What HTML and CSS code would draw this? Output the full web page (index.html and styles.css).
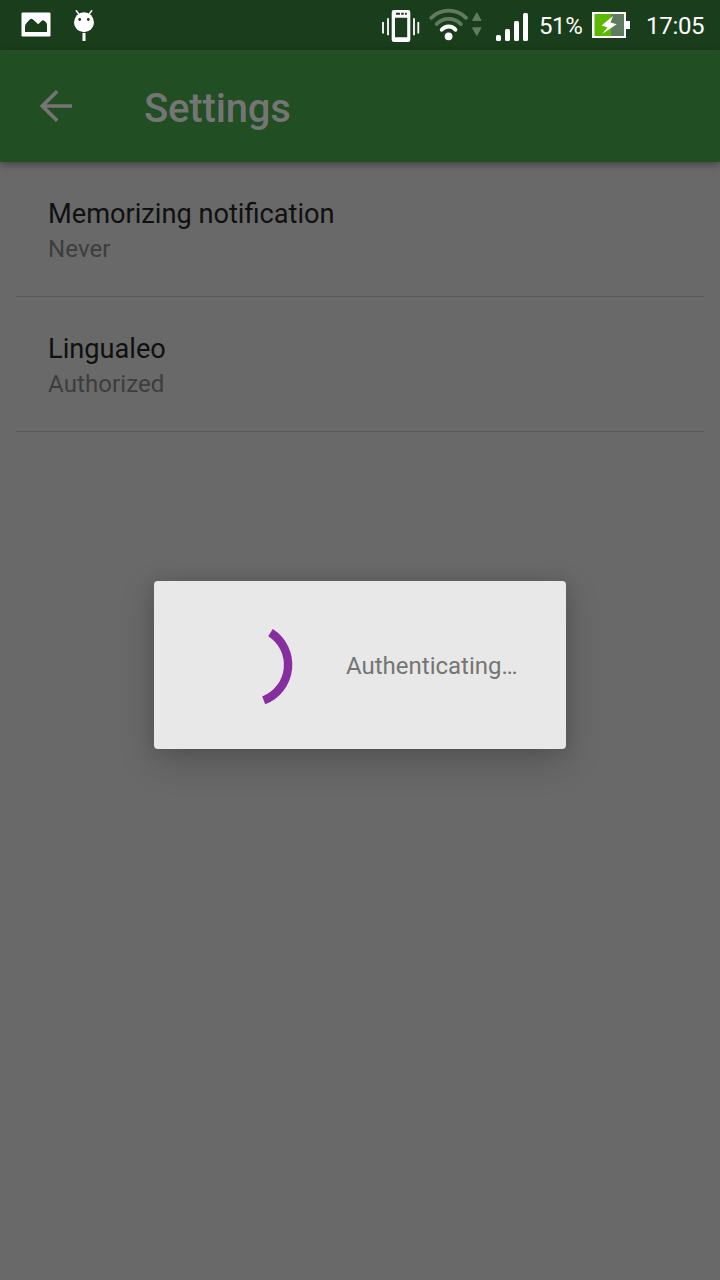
FILE: index.html
```html
<!DOCTYPE html>
<html lang="en">
<head>
<meta charset="utf-8">
<title>Settings</title>
<link rel="stylesheet" href="styles.css">
</head>
<body>
<div class="screen">
  <header class="status">
    <svg class="ico-picture" width="30" height="50" viewBox="21 0 30 50"><path fill="#fff" fill-rule="evenodd" d="M22.500 12.600h27q1 0 1 1v22q0 1-1 1h-27q-1 0-1-1v-22q0-1 1-1zM25 32h22v-7q0-2-1.500-3.200l-1.800-1.300q-1.200-.6-2.200.4l-3.300 3.300-5.200-4.800q-1.700-1.200-3.200.2l-3.300 3.400q-1.500 1.500-1.500 3.500z"/></svg>
    <svg class="ico-droid" width="22" height="50" viewBox="73 0 22 50"><g stroke="#fff" fill="none" stroke-width="1.500" stroke-linecap="round"><path d="M76.300 10.800l3 4M91.700 10.800l-3 4"/></g><circle cx="84" cy="22.200" r="10" fill="#fff"/><circle cx="79.700" cy="19.500" r="1.400" fill="#1a3e1b"/><circle cx="88.300" cy="19.500" r="1.400" fill="#1a3e1b"/><path fill="#fff" d="M82.500 33h3v8h-3z"/></svg>
    <span class="spacer"></span>
    <svg class="ico-vibrate" width="38" height="50" viewBox="382 0 38 50"><path fill="#fff" fill-rule="evenodd" d="M394 10h14q2.300 0 2.300 2.300v27.400q0 2.300-2.300 2.300h-14q-2.300 0-2.300-2.300V12.300q0-2.300 2.300-2.300zM395 17.700v19.600h12.200V17.700zM396 12.800v2h4v-2zM401.200 12.800v2h2.600v-2zM405 12.800v2h1.800v-2z"/><path stroke="#fff" stroke-width="1.800" d="M383 22v11.500M388 18.300v17M414 18.300v17M418.300 22v11.500"/></svg>
    <svg class="ico-wifi" width="54" height="50" viewBox="429 0 54 50"><g fill="none" stroke-width="3.800" stroke-linecap="round"><path stroke="#5f7b60" d="M431.300 17.800Q438.500 10.700 448.700 10.700T466 17.800M436.700 24Q441.500 18.800 448.700 18.800T460.700 24"/><path stroke="#fff" d="M441.700 29.700Q444.500 26.500 448.700 26.500T455.500 29.700"/></g><circle cx="448.600" cy="36.300" r="3.900" fill="#fff"/><path fill="#5f7b60" stroke="#5f7b60" stroke-linejoin="round" d="M472.500 20.400h8.500l-4.200-7.600zM472.500 27.800h8.500l-4.200 7.800z"/></svg>
    <svg class="ico-signal" width="32" height="50" viewBox="496 0 32 50"><g fill="#fff"><rect x="496" y="35" width="5" height="6" rx="1.500"/><rect x="505" y="29" width="5" height="12" rx="1.500"/><rect x="514" y="21" width="5" height="20" rx="1.500"/><rect x="523" y="13" width="5" height="28" rx="1.500"/></g></svg>
    <span class="percent">51%</span>
    <svg class="ico-battery" width="38" height="50" viewBox="592 0 38 50"><path fill="#fff" d="M592 12h34v9h4v8h-4v9h-34z"/><path fill="#5f7b60" d="M611 14h13v22h-13z"/><path fill="#5cb800" d="M594.500 14H611v22h-16.500z"/><path fill="#fff" d="M613 16l-11.500 9.500 6 2-5.500 6.500 14.800-9.700-6.300-1.800z"/></svg>
    <span class="clock">17:05</span>
  </header>
  <div class="appbar">
    <svg class="back" width="34" height="34" viewBox="39 89 34 34"><path d="M57.200 91.200L42.300 106l14.900 14.800M42 106h30" fill="none" stroke="#757575" stroke-width="3.700"/></svg>
    <h1 class="title">Settings</h1>
  </div>
  <main class="list">
    <section class="item">
      <div class="name">Memorizing notification</div>
      <div class="value">Never</div>
    </section>
    <section class="item">
      <div class="name">Lingualeo</div>
      <div class="value">Authorized</div>
    </section>
  </main>
  <div class="dialog">
    <svg class="spinner" width="96" height="96" viewBox="-48 -48 96 96"><path d="M20.500-32.400A38.200 38.200 0 0 1 13.700 35.400" fill="none" stroke="#862d9f" stroke-width="8.400"/></svg>
    <span class="message">Authenticating…</span>
  </div>
</div>
</body>
</html>
```
FILE: styles.css
```css
body {
  margin: 0;
  font-family: Roboto, "Noto Sans", sans-serif;
}

.screen {
  position: relative;
  display: flex;
  flex-direction: column;
  height: 1280px;
  background: #696969;
  overflow: hidden;
}

.status {
  display: flex;
  height: 50px;
  line-height: 53px;
  padding: 0 16px 0 21px;
  box-sizing: border-box;
  background: #1a3e1b;
  color: #fff;
  font-size: 24px;
}

.status svg { flex: none; }
.ico-droid { margin-left: 22px; }
.spacer { flex: 1; }
.ico-wifi { margin-left: 9px; }
.ico-signal { margin-left: 13px; }
.percent { width: 53px; margin-left: 11px; letter-spacing: -0.4px; }
.clock { width: 58px; margin-left: 16px; letter-spacing: -0.3px; }

.appbar {
  display: flex;
  align-items: center;
  height: 112px;
  padding-left: 39px;
  background: #214e23;
  box-shadow: 0 2px 8px rgba(0, 0, 0, 0.4);
  z-index: 1;
}

.title {
  margin: 5px 0 0 71px;
  font-size: 40px;
  font-weight: 500;
  line-height: 48px;
  letter-spacing: -0.15px;
  color: #757575;
}

.list { padding: 0 16px; }

.item {
  height: 135px;
  padding: 35px 32px 0;
  box-sizing: border-box;
  border-bottom: 1px solid #5a5a5a;
}

.name {
  font-size: 27.2px;
  line-height: 34px;
  color: #101010;
}

.value {
  margin-top: 2px;
  font-size: 24px;
  line-height: 32px;
  letter-spacing: 0.1px;
  color: #3d3d3d;
}

.dialog {
  position: absolute;
  top: 581px;
  left: 154px;
  display: flex;
  align-items: center;
  width: 412px;
  height: 168px;
  padding-left: 48px;
  box-sizing: border-box;
  border-radius: 4px;
  background: #e8e8e8;
  box-shadow: 0 12px 36px rgba(0, 0, 0, 0.2), 0 0 16px rgba(0, 0, 0, 0.1);
}

.message {
  margin: 2px 0 0 48px;
  font-size: 24px;
  color: #757575;
}
```
